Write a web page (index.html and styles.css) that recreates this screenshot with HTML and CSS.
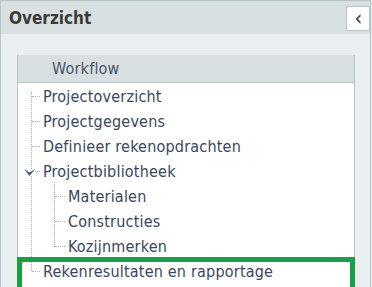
FILE: index.html
```html
<!DOCTYPE html>
<html lang="en">

<head>
      <meta charset="UTF-8">
      <meta name="viewport" content="width=device-width, initial-scale=1.0">
      <title>Overzicht</title>
      <link rel="stylesheet" href="styles.css">
</head>

<body>
      <div class="panel">
            <div class="panel-header">
                  <h2>Overzicht</h2>
                  <button class="collapse" title="Inklappen">
                        <svg width="8" height="12" viewBox="0 0 8 12">
                              <path d="M6.5 1 L1.5 6 L6.5 11 L6.5 8.6 L4 6 L6.5 3.4 Z" fill="#4a4a4a"/>
                        </svg>
                  </button>
            </div>
            <div class="panel-body">
                  <div class="workflow">
                        <div class="workflow-header">Workflow</div>
                        <ul class="tree">
                              <li><div class="node">Projectoverzicht</div></li>
                              <li><div class="node">Projectgegevens</div></li>
                              <li><div class="node">Definieer rekenopdrachten</div></li>
                              <li>
                                    <div class="node">
                                          <svg class="toggle" width="11" height="7" viewBox="0 0 11 7">
                                                <path d="M0 0 L5.5 3.6 L11 0 L5.5 7 Z" fill="#3c5674"/>
                                          </svg>
                                          Projectbibliotheek
                                    </div>
                                    <ul class="sub">
                                          <li><div class="node">Materialen</div></li>
                                          <li><div class="node">Constructies</div></li>
                                          <li><div class="node">Kozijnmerken</div></li>
                                    </ul>
                              </li>
                              <li class="current"><div class="node">Rekenresultaten en rapportage</div></li>
                        </ul>
                  </div>
            </div>
      </div>
</body>

</html>
```
FILE: styles.css
```css
* {
      box-sizing: border-box;
      font-family: "DejaVu Sans Condensed", "DejaVu Sans", sans-serif;
      font-stretch: condensed;
}
body {
      margin: 0;
      padding: 0;
      background-color: #e9eef0;
}
.panel {
      width: 371px;
      height: 287px;
      overflow: hidden;
      border: 1px solid #b6c3c7;
      border-bottom: none;
      background-color: #e9eef0;
}

.panel-header {
      height: 33px;
      display: flex;
      align-items: center;
      justify-content: space-between;
      padding-left: 8px;
      background-color: #d8e0e1;
}

.panel-header h2 {
      margin: 0;
      font-size: 17px;
      font-weight: bold;
      color: #3e3a37;
}

.collapse {
      width: 24px;
      height: 25px;
      margin-top: 2px;
      padding: 0;
      display: flex;
      align-items: center;
      justify-content: center;
      border: 1px solid #b6c3c7;
      background-color: white;
}

.panel-body {
      padding: 21px 15px 0 16px;
}

.workflow {
      height: 240px;
      border: 1px solid #b3c4c7;
      border-top: none;
      border-bottom: none;
      background-color: white;
}

.workflow-header {
      height: 28px;
      line-height: 27px;
      padding-left: 34px;
      font-size: 16px;
      letter-spacing: 0.2px;
      color: #4a5668;
      background-color: #d7dfe0;
      border-bottom: 1px solid #b3c4c7;
}

ul {
      list-style: none;
      margin: 0;
      padding: 0;
}

.tree {
      position: relative;
      padding-top: 1px;
}

/* dotted guide lines */
.tree::before {
      content: "";
      position: absolute;
      left: 13px;
      top: 9px;
      bottom: 13px;
      border-left: 1px dotted #9fb3c6;
}

.sub {
      position: relative;
}

.sub::before {
      content: "";
      position: absolute;
      left: 36px;
      top: -2px;
      bottom: 12px;
      border-left: 1px dotted #9fb3c6;
}

.node {
      position: relative;
      height: 25px;
      line-height: 25px;
      padding-left: 25px;
      font-size: 16px;
      letter-spacing: 0.2px;
      color: #38465e;
      white-space: nowrap;
}

.node::after {
      content: "";
      position: absolute;
      left: 14px;
      top: 12px;
      width: 8px;
      border-top: 1px dotted #9fb3c6;
}

.sub .node {
      padding-left: 50px;
}

.sub .node::after {
      left: 37px;
      width: 10px;
}

.toggle {
      position: absolute;
      left: 6px;
      top: 10px;
      z-index: 1;
      background-color: white;
}

.current {
      position: relative;
}

.current::after {
      content: "";
      position: absolute;
      top: -2px;
      left: -1px;
      right: -1px;
      height: 31px;
      border: 5px solid #1a9f45;
}
```
